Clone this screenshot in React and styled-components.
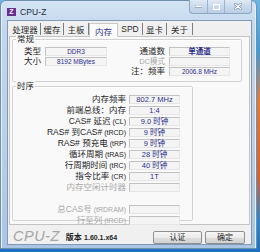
import React from "react";
import styled, { createGlobalStyle } from "styled-components";

const Global = createGlobalStyle`
  html, body { margin: 0; padding: 0; }
  body {
    width: 260px;
    height: 252px;
    overflow: hidden;
    font-family: "Liberation Sans", "Noto Sans CJK SC", sans-serif;
  }
`;

const Desktop = styled.div`
  width: 260px;
  height: 252px;
  box-sizing: border-box;
  padding: 0 3px 3px 0;
  background: linear-gradient(180deg, #6bb8e6 0%, #3d9bd6 20%, #e77a32 40%, #d9602a 70%, #2c86cf 88%, #1f6fbe 100%);
`;

const Window = styled.div`
  width: 257px;
  height: 249px;
  box-sizing: border-box;
  border: 1px solid #6e8fae;
  border-radius: 6px 6px 0 0;
  background: linear-gradient(180deg, #d3e3f3 0%, #c2d7ed 12%, #b7cfe8 60%, #aac6e4 100%);
  box-shadow: inset 1px 0 0 #e8f1fa, inset -1px 0 0 #e8f1fa;
  display: flex;
  flex-direction: column;
  padding: 0 4px 3px 6px;
`;

const TitleBar = styled.div`
  height: 19px;
  display: flex;
  align-items: center;
  gap: 4px;
  padding-top: 2px;
  box-sizing: border-box;
`;

const AppIcon = styled.div`
  width: 9px;
  height: 8px;
  background: #6a2d91;
  color: #fff;
  font: bold 7px/8px "Liberation Sans", sans-serif;
  text-align: center;
`;

const TitleText = styled.span`
  font-size: 8.5px;
  color: #1c2a3a;
  letter-spacing: 0.1px;
`;

const Controls = styled.div`
  margin-left: auto;
  align-self: flex-start;
  margin-top: -3px;
  display: flex;
  height: 13px;
  border: 1px solid #8ea8c4;
  border-top: none;
  border-radius: 0 0 4px 4px;
  overflow: hidden;
  background: linear-gradient(180deg, #dfe9f5 0%, #c9d9ec 50%, #bccfe6 100%);
`;

const CtrlButton = styled.div`
  width: ${(p) => p.w}px;
  display: flex;
  align-items: center;
  justify-content: center;
  border-left: ${(p) => (p.first ? "none" : "1px solid #9db3cc")};
`;

const Client = styled.div`
  flex: 1;
  border: 1px solid #8199b4;
  background: #f0f0f0;
  display: flex;
  flex-direction: column;
`;

const TabStrip = styled.div`
  height: 15px;
  display: flex;
  align-items: flex-end;
  padding-left: 2px;
`;

const Tab = styled.div`
  width: ${(p) => p.w}px;
  height: ${(p) => (p.active ? 14 : 12)}px;
  box-sizing: border-box;
  display: flex;
  align-items: center;
  justify-content: center;
  padding-top: ${(p) => (p.active ? 1 : 0)}px;
  font-size: 8.5px;
  color: ${(p) => (p.active ? "#2e3192" : "#2a2a2a")};
  border-right: ${(p) => (p.active ? "1px solid #c9c9c9" : "1px solid #7d7d7d")};
  border-left: ${(p) => (p.active ? "1px solid #c9c9c9" : "none")};
  border-top: ${(p) => (p.active ? "1px solid #c9c9c9" : "none")};
  background: ${(p) => (p.active ? "#fbfbfb" : "transparent")};
  margin-bottom: ${(p) => (p.active ? "-1px" : "1px")};
  position: relative;
  z-index: ${(p) => (p.active ? 1 : 0)};
`;

const TabPage = styled.div`
  height: 189px;
  margin: 0 1px;
  border: 1px solid #c3c3c3;
  background: #f9f9f9;
  box-sizing: border-box;
  padding: 2px 0 0 2px;
  display: flex;
  flex-direction: column;
  gap: 4px;
`;

const Group = styled.div`
  position: relative;
  width: ${(p) => p.w}px;
  height: ${(p) => p.h}px;
  box-sizing: border-box;
  border: 1px solid #d2d2d2;
  border-radius: 2px;
  box-shadow: inset 1px 1px 0 #ffffff;
`;

const Caption = styled.span`
  position: absolute;
  top: -6px;
  left: 3px;
  padding: 0 1px;
  background: #f9f9f9;
  font-size: 8.5px;
  line-height: 10px;
  color: #1e1e1e;
`;

const GeneralGrid = styled.div`
  display: grid;
  grid-template-columns: 28px 62px 54px 61px;
  grid-auto-rows: 10px;
  column-gap: 4px;
  padding-top: 6px;
`;

const Label = styled.div`
  font-size: ${(p) => (p.small ? 7.5 : 8.5)}px;
  color: ${(p) => (p.dim ? "#a8a8a8" : "#1e1e1e")};
  text-align: right;
  white-space: nowrap;
  line-height: 9px;
  grid-column: ${(p) => p.col || "auto"};
  grid-row: ${(p) => p.row || "auto"};
  align-self: center;
`;

const ValueBox = styled.div`
  height: 9px;
  box-sizing: border-box;
  border: 1px solid #c2c2c2;
  border-right-color: #e6e6e6;
  border-bottom-color: #e6e6e6;
  background: #f4f4f4;
  color: #2b2d8e;
  font-size: ${(p) => (p.cjk ? 7.5 : 6.5)}px;
  font-weight: ${(p) => (p.bold ? 700 : 400)};
  line-height: 7px;
  text-align: center;
  white-space: nowrap;
  grid-column: ${(p) => p.col || "auto"};
  grid-row: ${(p) => p.row || "auto"};
  align-self: center;
`;

const TimingGrid = styled.div`
  display: grid;
  grid-template-columns: 113px 51px;
  grid-auto-rows: 11px;
  column-gap: 3px;
  padding-top: 7px;
`;

const Spacer = styled.div`
  grid-column: 1 / -1;
  height: 6px;
`;

const Latin = styled.span`
  font-size: 7px;
`;

const Footer = styled.div`
  flex: 1;
  display: flex;
  align-items: center;
  padding: 2px 6px 0 5px;
  gap: 6px;
`;

const Logo = styled.span`
  font-size: 14.5px;
  font-style: italic;
  color: #a5a5a5;
  letter-spacing: 0.5px;
`;

const Version = styled.span`
  font-size: 8px;
  color: #1e1e1e;
  font-weight: 700;
  margin-top: 1px;
`;

const Buttons = styled.div`
  margin-left: auto;
  display: flex;
  gap: 3px;
  margin-top: 4px;
`;

const Button = styled.div`
  width: ${(p) => p.w}px;
  height: 13px;
  box-sizing: border-box;
  border: 1px solid #8f8f8f;
  border-radius: 2px;
  background: linear-gradient(180deg, #f6f6f6 0%, #ebebeb 50%, #dddddd 51%, #d2d2d2 100%);
  font-size: 8px;
  line-height: 11px;
  text-align: center;
  color: #1e1e1e;
`;

const tabs = [
  { label: "处理器", w: 31 },
  { label: "缓存", w: 23 },
  { label: "主板", w: 25 },
  { label: "内存", w: 29, active: true },
  { label: "SPD", w: 25 },
  { label: "显卡", w: 24 },
  { label: "关于", w: 26 },
];

const timings = [
  { label: "内存频率", value: "802.7 MHz" },
  { label: "前端总线：内存", value: "1:4" },
  { label: "CAS# 延迟", tag: "(CL)", value: "9.0 时钟" },
  { label: "RAS# 到CAS#", tag: "(tRCD)", value: "9 时钟" },
  { label: "RAS# 预充电", tag: "(tRP)", value: "9 时钟" },
  { label: "循环周期", tag: "(tRAS)", value: "28 时钟" },
  { label: "行周期时间", tag: "(tRC)", value: "40 时钟" },
  { label: "指令比率", tag: "(CR)", value: "1T" },
  { label: "内存空闲计时器", value: "", dim: true },
];

const extraTimings = [
  { label: "总CAS号", tag: "(tRDRAM)" },
  { label: "行至列", tag: "(tRCD)" },
];

function TimingLabel({ label, tag, dim }) {
  return (
    <Label dim={dim}>
      {label}
      {tag && <Latin> {tag}</Latin>}
    </Label>
  );
}

export default function App() {
  return (
    <>
      <Global />
      <Desktop>
        <Window>
          <TitleBar>
            <AppIcon>Z</AppIcon>
            <TitleText>CPU-Z</TitleText>
            <Controls>
              <CtrlButton w={17} first>
                <svg width="7" height="3" viewBox="0 0 7 3">
                  <rect x="0" y="0" width="7" height="2.5" fill="#fff" stroke="#6d88a6" strokeWidth="0.6" />
                </svg>
              </CtrlButton>
              <CtrlButton w={16}>
                <svg width="7" height="6" viewBox="0 0 7 6">
                  <rect x="0.5" y="0.5" width="6" height="5" fill="none" stroke="#fff" strokeWidth="1.2" />
                </svg>
              </CtrlButton>
              <CtrlButton w={26}>
                <svg width="8" height="7" viewBox="0 0 8 7">
                  <path d="M1 1 L7 6 M7 1 L1 6" stroke="#6d88a6" strokeWidth="2.4" strokeLinecap="round" />
                  <path d="M1 1 L7 6 M7 1 L1 6" stroke="#fff" strokeWidth="1.3" strokeLinecap="round" />
                </svg>
              </CtrlButton>
            </Controls>
          </TitleBar>
          <Client>
            <TabStrip>
              {tabs.map((t) => (
                <Tab key={t.label} w={t.w} active={t.active}>
                  {t.label}
                </Tab>
              ))}
            </TabStrip>
            <TabPage>
              <Group w={230} h={43}>
                <Caption>常规</Caption>
                <GeneralGrid>
                  <Label col="1" row="1">类型</Label>
                  <ValueBox col="2" row="1">DDR3</ValueBox>
                  <Label col="1" row="2">大小</Label>
                  <ValueBox col="2" row="2">8192 MBytes</ValueBox>
                  <Label col="3" row="1">通道数</Label>
                  <ValueBox col="4" row="1" cjk bold>单通道</ValueBox>
                  <Label col="3" row="2" dim small>DC模式</Label>
                  <ValueBox col="4" row="2" />
                  <Label col="3" row="3">注：频率</Label>
                  <ValueBox col="4" row="3">2006.8 MHz</ValueBox>
                </GeneralGrid>
              </Group>
              <Group w={181} h={135}>
                <Caption>时序</Caption>
                <TimingGrid>
                  {timings.map((t) => (
                    <React.Fragment key={t.label}>
                      <TimingLabel label={t.label} tag={t.tag} dim={t.dim} />
                      <ValueBox cjk>{t.value}</ValueBox>
                    </React.Fragment>
                  ))}
                  <Spacer />
                  {extraTimings.map((t) => (
                    <React.Fragment key={t.label}>
                      <TimingLabel label={t.label} tag={t.tag} dim />
                      <ValueBox />
                    </React.Fragment>
                  ))}
                </TimingGrid>
              </Group>
            </TabPage>
            <Footer>
              <Logo>CPU-Z</Logo>
              <Version>
                版本 <Latin>1.60.1.x64</Latin>
              </Version>
              <Buttons>
                <Button w={49}>认证</Button>
                <Button w={40}>确定</Button>
              </Buttons>
            </Footer>
          </Client>
        </Window>
      </Desktop>
    </>
  );
}
